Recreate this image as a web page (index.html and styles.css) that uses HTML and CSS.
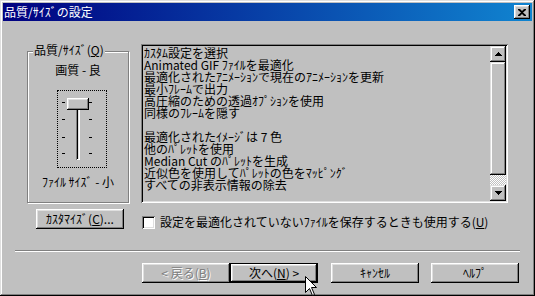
FILE: index.html
```html
<!DOCTYPE html>
<html lang="ja">
<head>
<meta charset="utf-8">
<title>品質/ｻｲｽﾞの設定</title>
<link rel="stylesheet" href="styles.css">
</head>
<body>
<div class="window">
  <div class="titlebar">
    <span class="title">品質/ｻｲｽﾞの設定</span>
    <span class="close">
      <svg width="8" height="7" viewBox="0 0 8 7"><path d="M0 0h2l2 2 2-2h2v1L5 3.5 8 6v1H6L4 5 2 7H0V6l3-2.5L0 1z" fill="#000"/></svg>
    </span>
  </div>
  <div class="content">
    <div class="top">
      <div class="group">
        <span class="legend">品質/ｻｲｽﾞ(<u>Q</u>)</span>
        <div class="qlabel">画質 - 良</div>
        <div class="slider">
          <span class="tick l t1"></span><span class="tick l t2"></span><span class="tick l t3"></span><span class="tick l t4"></span>
          <span class="tick r t1"></span><span class="tick r t2"></span><span class="tick r t3"></span><span class="tick r t4"></span>
          <span class="channel"></span>
          <span class="thumb"></span>
        </div>
        <div class="slabel">ﾌｧｲﾙ ｻｲｽﾞ - 小</div>
      </div>
      <div class="listbox">
        <ul class="items">
          <li>ｶｽﾀﾑ設定を選択</li>
          <li>Animated GIF ﾌｧｲﾙを最適化</li>
          <li>最適化されたｱﾆﾒｰｼｮﾝで現在のｱﾆﾒｰｼｮﾝを更新</li>
          <li>最小ﾌﾚｰﾑで出力</li>
          <li>高圧縮のための透過ｵﾌﾟｼｮﾝを使用</li>
          <li>同様のﾌﾚｰﾑを隠す</li>
          <li>&nbsp;</li>
          <li>最適化されたｲﾒｰｼﾞは 7 色</li>
          <li>他のﾊﾟﾚｯﾄを使用</li>
          <li>Median Cut のﾊﾟﾚｯﾄを生成</li>
          <li>近似色を使用してﾊﾟﾚｯﾄの色をﾏｯﾋﾟﾝｸﾞ</li>
          <li>すべての非表示情報の除去</li>
        </ul>
        <div class="scrollbar">
          <span class="sbtn"><svg width="7" height="4" viewBox="0 0 7 4"><path d="M3 0h1v1h1v1h1v1h1v1H0V3h1V2h1V1h1z" fill="#000"/></svg></span>
          <span class="sthumb"></span>
          <span class="strack"></span>
          <span class="sbtn"><svg width="7" height="4" viewBox="0 0 7 4"><path d="M0 0h7v1H6v1H5v1H4v1H3V3H2V2H1V1H0z" fill="#000"/></svg></span>
        </div>
      </div>
    </div>
    <div class="row2">
      <span class="btn custom">ｶｽﾀﾏｲｽﾞ(<u>C</u>)...</span>
      <label class="check"><span class="box"></span><span class="ctext">設定を最適化されていないﾌｧｲﾙを保存するときも使用する(<u>U</u>)</span></label>
    </div>
    <div class="sep"></div>
    <div class="buttons">
      <span class="btn disabled">&lt; 戻る(<u>B</u>)</span>
      <span class="btn default">次へ(<u>N</u>) &gt;</span>
      <span class="btn cancel">ｷｬﾝｾﾙ</span>
      <span class="btn">ﾍﾙﾌﾟ</span>
    </div>
  </div>
  <svg class="cursor" width="13" height="21" viewBox="0 0 13 21"><path d="M0.5 0.5V16.5L4.5 12.5L7.5 19.5L9.5 18.5L6.5 11.5H11.5Z" fill="#fff" stroke="#000" stroke-width="1" stroke-linejoin="miter"/></svg>
</div>
</body>
</html>
```
FILE: styles.css
```css
* { box-sizing: border-box; }
html, body { margin: 0; padding: 0; }
body {
  width: 535px;
  height: 296px;
  overflow: hidden;
  background: #c0c0c0;
  font-family: "Noto Sans CJK JP", sans-serif;
  font-size: 12px;
  line-height: 12px;
  color: #000;
}
.window {
  position: relative;
  width: 535px;
  height: 296px;
  padding: 3px;
  background: #c0c0c0;
  box-shadow: inset -1px -1px #000, inset 1px 1px #dfdfdf, inset -2px -2px #808080, inset 2px 2px #fff;
  display: flex;
  flex-direction: column;
}
.titlebar {
  height: 18px;
  display: flex;
  align-items: center;
  justify-content: space-between;
  padding: 0 2px 0 1px;
  background: linear-gradient(to right, #000080, #1084d0);
  color: #fff;
}
.title { line-height: 18px; }
.close {
  width: 16px;
  height: 14px;
  display: flex;
  align-items: center;
  justify-content: center;
  background: #c0c0c0;
  box-shadow: inset -1px -1px #000, inset 1px 1px #fff, inset -2px -2px #808080, inset 2px 2px #dfdfdf;
}
.close svg { display: block; }
.content {
  display: flex;
  flex-direction: column;
  padding-top: 23px;
}
.top {
  display: flex;
  align-items: flex-start;
  margin-left: 24px;
}
.group {
  position: relative;
  width: 102px;
  height: 152px;
  margin-top: 7px;
  border: 1px solid #808080;
  box-shadow: inset 1px 1px #fff, 1px 1px #fff;
  display: flex;
  flex-direction: column;
  align-items: center;
  padding-top: 12px;
}
.legend {
  position: absolute;
  top: -8px;
  left: 5px;
  padding: 0 1px;
  background: #c0c0c0;
  white-space: nowrap;
}
.qlabel, .slabel { white-space: nowrap; }
.slider {
  position: relative;
  width: 50px;
  height: 78px;
  margin-top: 14px;
  margin-left: 7px;
  border: 1px dotted #000;
}
.tick {
  position: absolute;
  width: 3px;
  height: 1px;
  background: #000;
}
.tick.l { left: 4px; }
.tick.r { left: 31px; }
.t1 { top: 11px; }
.t2 { top: 28px; }
.t3 { top: 46px; }
.t4 { top: 62px; }
.channel {
  position: absolute;
  left: 18px;
  top: 9px;
  width: 4px;
  height: 60px;
  box-shadow: inset 1px 1px #808080, inset -1px -1px #fff, inset 2px 2px #000, inset -2px -2px #dfdfdf;
}
.thumb {
  position: absolute;
  left: 9px;
  top: 7px;
  width: 22px;
  height: 12px;
  background: #c0c0c0;
  box-shadow: inset -1px -1px #000, inset 1px 1px #fff, inset -2px -2px #808080, inset 2px 2px #dfdfdf;
}
.slabel { margin-top: 8px; }
.listbox {
  width: 367px;
  height: 159px;
  margin-left: 12px;
  padding: 2px;
  display: flex;
  box-shadow: inset 1px 1px #808080, inset -1px -1px #fff, inset 2px 2px #000, inset -2px -2px #dfdfdf;
}
.items {
  flex: 1;
  margin: 0;
  padding: 1px 0 0 1px;
  list-style: none;
  overflow: hidden;
  white-space: nowrap;
}
.items li { height: 12px; line-height: 12px; }
.scrollbar {
  width: 16px;
  display: flex;
  flex-direction: column;
}
.sbtn, .sthumb {
  background: #c0c0c0;
  box-shadow: inset -1px -1px #000, inset 1px 1px #dfdfdf, inset -2px -2px #808080, inset 2px 2px #fff;
}
.sbtn {
  height: 16px;
  display: flex;
  align-items: center;
  justify-content: center;
}
.sbtn svg { display: block; }
.sthumb { height: 113px; }
.strack {
  flex: 1;
  background-color: #c0c0c0;
  background-image: conic-gradient(#fff 25%, #c0c0c0 0 50%, #fff 0 75%, #c0c0c0 0);
  background-size: 2px 2px;
}
.row2 {
  display: flex;
  align-items: flex-end;
  margin-top: 6px;
  margin-left: 33px;
}
.btn {
  width: 88px;
  height: 20px;
  display: flex;
  align-items: center;
  justify-content: center;
  white-space: nowrap;
  background: #c0c0c0;
  box-shadow: inset -1px -1px #000, inset 1px 1px #fff, inset -2px -2px #808080, inset 2px 2px #dfdfdf;
  line-height: 12px;
}
.check {
  display: flex;
  align-items: center;
  margin-left: 18px;
  height: 13px;
}
.box {
  width: 13px;
  height: 13px;
  background: #fff;
  box-shadow: inset 1px 1px #808080, inset -1px -1px #fff, inset 2px 2px #000, inset -2px -2px #dfdfdf;
}
.ctext { margin-left: 5px; white-space: nowrap; margin-top: -1px; }
.sep {
  height: 2px;
  margin: 21px 12px 0 12px;
  border-top: 1px solid #808080;
  border-bottom: 1px solid #fff;
}
.buttons {
  display: flex;
  justify-content: flex-end;
  margin-top: 11px;
  padding-right: 13px;
}
.btn.disabled {
  color: #808080;
  text-shadow: 1px 1px #fff;
}
.btn.default {
  border: 1px solid #000;
  margin-right: 13px;
}
.btn.cancel { margin-right: 12px; }
.cursor {
  position: absolute;
  left: 305px;
  top: 276px;
}
```
